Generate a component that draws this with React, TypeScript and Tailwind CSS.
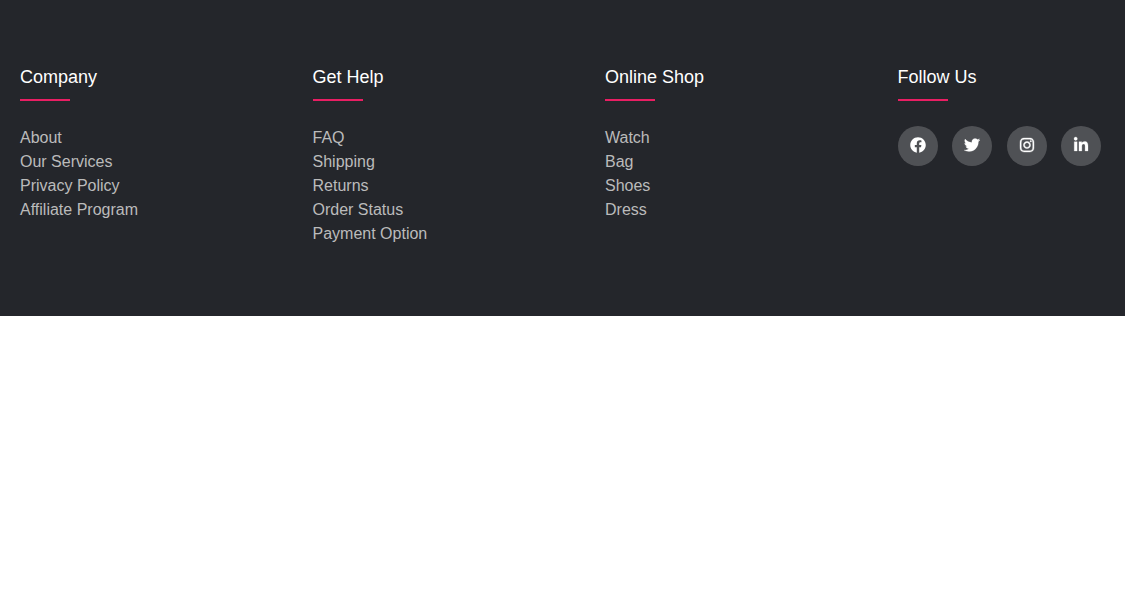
import React from "react";
import { FaFacebook, FaTwitter, FaInstagram, FaLinkedinIn } from "react-icons/fa";

const columns = [
  { title: "Company", links: ["About", "Our Services", "Privacy Policy", "Affiliate Program"] },
  { title: "Get Help", links: ["FAQ", "Shipping", "Returns", "Order Status", "Payment Option"] },
  { title: "Online Shop", links: ["Watch", "Bag", "Shoes", "Dress"] },
];

const socials = [
  { label: "Facebook", Icon: FaFacebook, weight: "" },
  { label: "Twitter", Icon: FaTwitter, weight: "stroke-[6px]" },
  { label: "Instagram", Icon: FaInstagram, weight: "stroke-[12px]" },
  { label: "LinkedIn", Icon: FaLinkedinIn, weight: "stroke-[8px]" },
];

function Heading({ children }: { children: React.ReactNode }) {
  return (
    <h4 className="mb-[25px] text-lg leading-5 font-medium text-white after:mt-3 after:block after:h-0.5 after:w-[50px] after:bg-[#e91e63] after:content-['']">
      {children}
    </h4>
  );
}

export default function App() {
  return (
    <footer className="grid grid-cols-4 gap-x-[85px] bg-[#24262b] px-5 pt-[67px] pb-[70px] font-['Liberation_Sans',Arial,sans-serif]">
      {columns.map(({ title, links }) => (
        <div key={title}>
          <Heading>{title}</Heading>
          <ul>
            {links.map((link) => (
              <li key={link}>
                <a href="#" className="block text-base text-[#bbbbbb] hover:text-white">
                  {link}
                </a>
              </li>
            ))}
          </ul>
        </div>
      ))}
      <div>
        <Heading>Follow Us</Heading>
        <div className="flex max-w-[204px] justify-between">
          {socials.map(({ label, Icon, weight }) => (
            <a
              key={label}
              href="#"
              aria-label={label}
              className="flex size-10 shrink-0 items-center justify-center rounded-full bg-white/20 pb-0.5 text-white"
            >
              <Icon className={`size-4 overflow-visible ${weight}`} />
            </a>
          ))}
        </div>
      </div>
    </footer>
  );
}
